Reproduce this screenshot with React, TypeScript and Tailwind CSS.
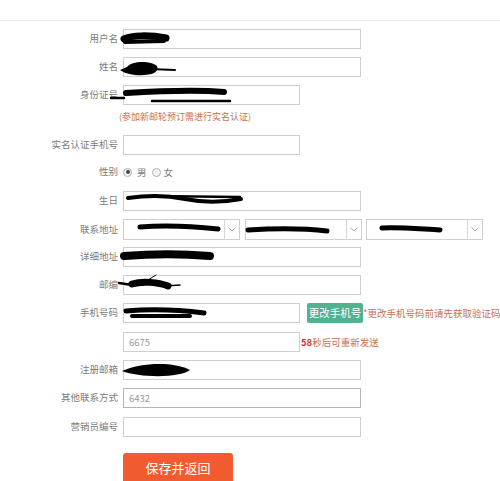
import type { ReactNode } from 'react';

const FONT = "font-['Noto_Sans_CJK_SC','Microsoft_YaHei',sans-serif]";

const Label = ({ children }: { children?: ReactNode }) => (
  <span className="w-[123px] shrink-0 pr-[5px] text-right text-[9.5px] leading-none text-[#7c7c7c]">
    {children}
  </span>
);

const Field = ({ wide = true, value, dark }: { wide?: boolean; value?: string; dark?: boolean }) => (
  <div
    className={`flex h-[20px] shrink-0 items-center border bg-white pl-[5px] text-[9.5px] text-[#9a9a9a] ${
      wide ? 'w-[238px]' : 'w-[177px]'
    } ${dark ? 'border-[#b4b4b4]' : 'border-[#cfcfcf]'}`}
  >
    {value}
  </div>
);

const Select = ({ className = '' }: { className?: string }) => (
  <div className={`flex h-[21px] w-[117px] shrink-0 border border-[#cfcfcf] bg-white ${className}`}>
    <div className="flex-1" />
    <div className="flex w-[15px] items-center justify-center border-l border-[#d6d6d6]">
      <svg width="8" height="5" viewBox="0 0 8 5" fill="none">
        <path d="M0.5 0.5 L4 4 L7.5 0.5" stroke="#a8a8a8" strokeWidth="1" />
      </svg>
    </div>
  </div>
);

const Radio = ({ checked }: { checked?: boolean }) => (
  <span className="flex h-[9px] w-[9px] items-center justify-center rounded-full border border-[#b0b0b0] bg-[#f4f4f4]">
    {checked && <span className="h-[4px] w-[4px] rounded-full bg-[#444]" />}
  </span>
);

// black marker strokes covering personal data in the screenshot
const Scribbles = () => (
  <svg className="pointer-events-none absolute left-0 top-0" width="500" height="481" viewBox="0 0 500 481">
    <g stroke="#000" strokeLinecap="round" fill="none">
      <path d="M124 39 C132 35 150 35 166 38" strokeWidth="7" />
      <path d="M125 42 L164 41" strokeWidth="4" />
      <path d="M150 69 L175 70" strokeWidth="2" />
      <path d="M126 93 C160 91 200 90 224 92" strokeWidth="6" />
      <path d="M152 101 L230 101" strokeWidth="2.5" />
      <path d="M111 98 L124 98" strokeWidth="2.5" />
      <path d="M128 198 C150 195 170 196 185 199 C205 203 225 202 241 199" strokeWidth="4" />
      <path d="M150 196 L240 197" strokeWidth="2.5" />
      <path d="M140 227 C165 225 190 226 218 229" strokeWidth="5" />
      <path d="M248 230 C280 228 310 229 327 231" strokeWidth="5" />
      <path d="M382 228 C400 227 420 229 440 230" strokeWidth="5" />
      <path d="M124 256 C150 254 185 254 210 256" strokeWidth="8" />
      <path d="M119 283 L132 285" strokeWidth="2.5" />
      <path d="M132 284 C142 281 158 282 168 286" strokeWidth="7" />
      <path d="M165 286 L180 285" strokeWidth="1.5" />
      <path d="M140 285 L156 275" strokeWidth="1" />
      <path d="M126 311 C150 309 180 310 204 313" strokeWidth="5" />
      <path d="M132 316 L190 316" strokeWidth="4" />
    </g>
    <g fill="#000">
      <path d="M120 70 L127 67 C131 61 150 60 157 66 C160 73 150 76 135 75 C127 74 123 72 120 70 Z" />
      <path d="M122 371 C140 363 172 361 190 370 C180 378 140 378 122 371 Z" />
    </g>
  </svg>
);

export default function App() {
  return (
    <div className={`relative h-[481px] w-[500px] overflow-hidden bg-white ${FONT}`}>
      <div className="h-[21px] border-b border-[#efefef]" />

      <div className="mt-[8px] flex items-center">
        <Label>用户名</Label>
        <Field />
      </div>
      <div className="mt-[8px] flex items-center">
        <Label>姓名</Label>
        <Field />
      </div>
      <div className="mt-[8px] flex items-center">
        <Label>身份证号</Label>
        <Field wide={false} />
      </div>
      <div className="mt-[6px] h-[12px] pl-[119px] text-[9px] leading-[12px] text-[#c8704f]">
        (参加新邮轮预订需进行实名认证)
      </div>
      <div className="mt-[12px] flex items-center">
        <Label>实名认证手机号</Label>
        <Field wide={false} />
      </div>
      <div className="mt-[8px] flex h-[18px] items-center text-[9.5px] text-[#7c7c7c]">
        <Label>性别</Label>
        <Radio checked />
        <span className="ml-[5px]">男</span>
        <span className="ml-[5px]">
          <Radio />
        </span>
        <span className="ml-[3px]">女</span>
      </div>
      <div className="mt-[10px] flex items-center">
        <Label>生日</Label>
        <Field />
      </div>
      <div className="mt-[8px] flex items-center">
        <Label>联系地址</Label>
        <Select />
        <Select className="ml-[5px]" />
        <Select className="ml-[4px]" />
      </div>
      <div className="mt-[7px] flex items-center">
        <Label>详细地址</Label>
        <Field />
      </div>
      <div className="mt-[8px] flex items-center">
        <Label>邮编</Label>
        <Field />
      </div>
      <div className="mt-[8px] flex items-center whitespace-nowrap">
        <Label>手机号码</Label>
        <Field wide={false} />
        <span className="ml-[7px] flex h-[20px] w-[56px] shrink-0 items-center justify-center rounded-[2px] bg-[#52b28f] text-[10.5px] text-white">
          更改手机号
        </span>
        <span className="shrink-0 text-[9.5px] text-[#c8704f]">*更改手机号码前请先获取验证码！</span>
      </div>
      <div className="mt-[9px] flex items-center whitespace-nowrap">
        <Label />
        <Field wide={false} value="6675" />
        <span className="ml-[1px] text-[9.5px] text-[#c8704f]">
          <span className="font-bold text-[#d22f3a]">58</span>秒后可重新发送
        </span>
      </div>
      <div className="mt-[8px] flex items-center">
        <Label>注册邮箱</Label>
        <Field />
      </div>
      <div className="mt-[8px] flex items-center">
        <Label>其他联系方式</Label>
        <Field value="6432" dark />
      </div>
      <div className="mt-[9px] flex items-center">
        <Label>营销员编号</Label>
        <Field />
      </div>
      <div className="mt-[16px] flex">
        <Label />
        <button className="flex h-[30px] w-[110px] items-center justify-center rounded-[3px] bg-[#f25a2f] text-[13px] text-white">
          保存并返回
        </button>
      </div>

      <Scribbles />
    </div>
  );
}
